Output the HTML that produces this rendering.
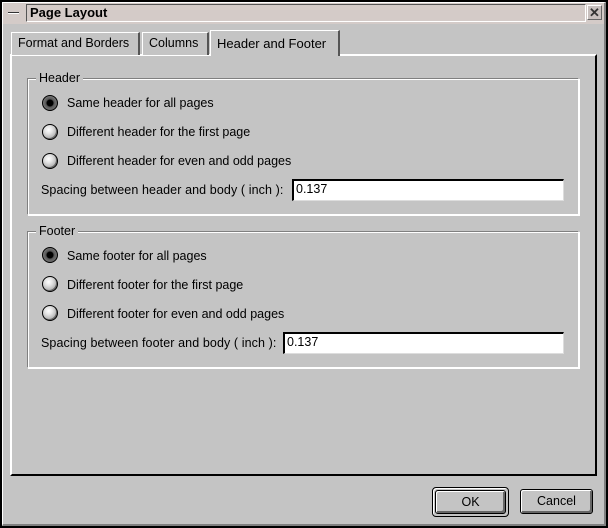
<!DOCTYPE html>
<html><head><style>
*{margin:0;padding:0;box-sizing:border-box}
body{width:608px;height:528px;background:#c4c4c4;font-family:"Liberation Sans",sans-serif;font-size:12px;color:#000;position:relative;overflow:hidden}
.a{position:absolute;white-space:nowrap}
.win{left:0;top:0;width:608px;height:528px;border-left:2px solid #000;border-top:2px solid #000;border-right:2px solid #000;border-bottom:2px solid #000}
.win2{left:2px;top:2px;width:604px;height:524px;border-left:1px solid #fff;border-top:1px solid #fff;border-right:2px solid #808080;border-bottom:2px solid #808080}
.tb{left:3px;top:3px;width:601px;height:21px;background:#d4cbc8}
.title{left:26px;top:4px;width:560px;height:18px;border:1px solid #fff;border-left-color:#555;border-top-color:#555;font-weight:bold;font-size:13px;padding-left:3px;line-height:16px;background:#d4cbc8}
.close{left:587px;top:5px;width:15px;height:15px;border:1px solid #fff;border-right-color:#666;border-bottom-color:#666;background:#c8c0be;font-size:13px;line-height:13px;text-align:center;font-weight:bold;color:#333}
.tab{top:32px;height:23px;background:#c4c4c4;border-left:1px solid #fff;border-top:1px solid #fff;border-right:2px solid #555;padding:0 6px;line-height:21px;font-size:12.5px}
.panel{left:10px;top:54px;width:587px;height:422px;border-left:2px solid #fff;border-top:2px solid #fff;border-right:2px solid #000;border-bottom:2px solid #000}
.grp{border:1px solid #fff;border-left-color:#808080;border-top-color:#808080;box-shadow:inset 1px 1px 0 #fff,1px 1px 0 #fff}
.gl{background:#c4c4c4;padding:0 3px;font-size:12.5px;line-height:14px}
.r{width:16px;height:16px;border-radius:50%;background:radial-gradient(circle at 40% 35%,#fff 0,#e4e4e4 30%,#a8a8a8 75%);border:1px solid #000;box-shadow:inset -1px -1px 0 #666}
.r.on{background:radial-gradient(circle,#000 0,#000 3px,#555 4px,#777 7px)}
.t{font-size:12.5px;line-height:14px}
.s{font-size:12.5px;line-height:14px;letter-spacing:0.1px}
.inp{height:22px;background:#fff;border:1px solid #ddd;border-left:2px solid #000;border-top:2px solid #000;padding-left:2px;line-height:17px;font-size:12.5px}
.btn{background:#c4c4c4;border:1px solid #000;border-radius:3px;text-align:center;font-size:12.5px;box-shadow:inset 1px 1px 0 #fff,inset -2px -2px 0 #666}
</style></head><body>
<div class="a win"></div><div class="a win2"></div>
<div class="a tb"></div>
<div class="a" style="left:8px;top:12px;width:11px;height:2px;background:#333;border-bottom:1px solid #fff"></div>
<div class="a title">Page Layout</div>
<div class="a close">✕</div>
<div class="a panel"></div>
<div class="a tab" style="left:11px;width:129px">Format and Borders</div>
<div class="a tab" style="left:142px;width:67px">Columns</div>
<div class="a tab" style="left:210px;top:30px;height:26px;width:130px;border-bottom:none;padding-top:2px;font-size:13px">Header and Footer</div>

<div class="a grp" style="left:27px;top:78px;width:552px;height:137px"></div>
<div class="a gl" style="left:36px;top:71px">Header</div>
<div class="a r on" style="left:42px;top:95px"></div><div class="a t" style="left:67px;top:96px">Same header for all pages</div>
<div class="a r" style="left:42px;top:124px"></div><div class="a t" style="left:67px;top:125px">Different header for the first page</div>
<div class="a r" style="left:42px;top:153px"></div><div class="a t" style="left:67px;top:154px">Different header for even and odd pages</div>
<div class="a s" style="left:41px;top:183px">Spacing between header and body ( inch ):</div>
<div class="a inp" style="left:292px;top:179px;width:272px">0.137</div>

<div class="a grp" style="left:27px;top:231px;width:552px;height:137px"></div>
<div class="a gl" style="left:36px;top:224px">Footer</div>
<div class="a r on" style="left:42px;top:247px"></div><div class="a t" style="left:67px;top:249px">Same footer for all pages</div>
<div class="a r" style="left:42px;top:276px"></div><div class="a t" style="left:67px;top:278px">Different footer for the first page</div>
<div class="a r" style="left:42px;top:305px"></div><div class="a t" style="left:67px;top:307px">Different footer for even and odd pages</div>
<div class="a s" style="left:41px;top:336px">Spacing between footer and body ( inch ):</div>
<div class="a inp" style="left:283px;top:332px;width:281px">0.137</div>

<div class="a" style="left:432px;top:487px;width:77px;height:30px;border:1px solid #000;border-radius:4px;box-shadow:inset 1px 1px 0 #fff"></div>
<div class="a btn" style="left:435px;top:490px;width:71px;height:24px;line-height:22px">OK</div>
<div class="a btn" style="left:520px;top:489px;width:73px;height:25px;line-height:23px">Cancel</div>
</body></html>
